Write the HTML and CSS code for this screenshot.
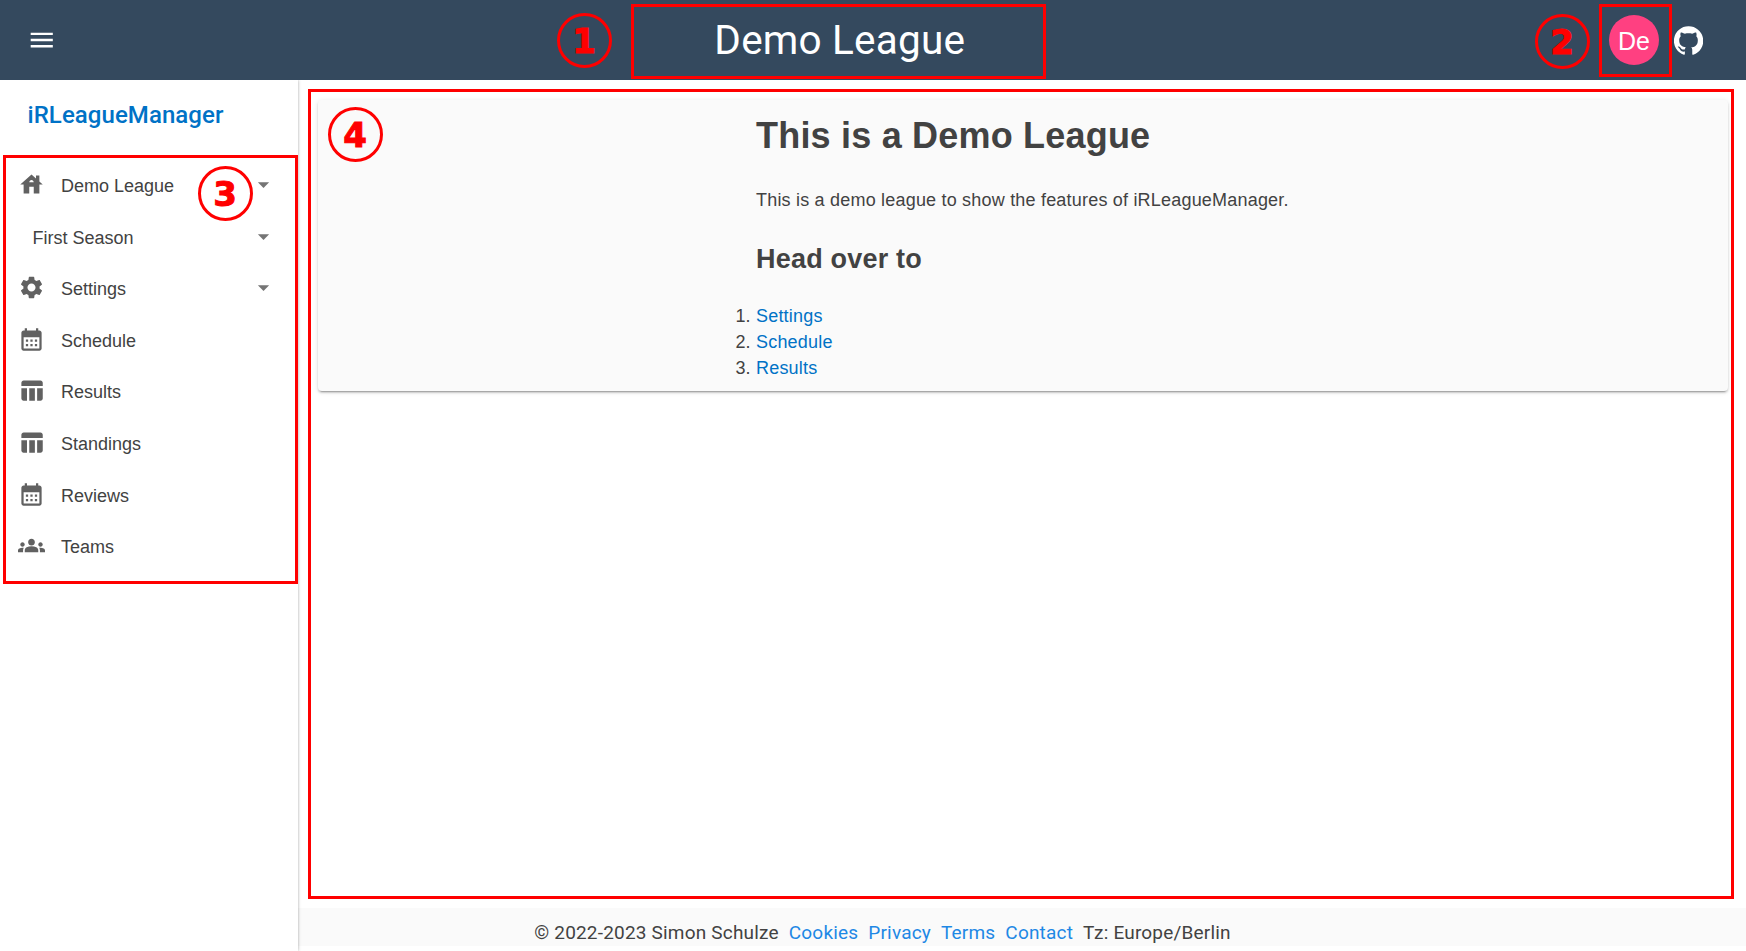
FILE: index.html
```html
<!DOCTYPE html>
<html lang="en">
<head>
<meta charset="utf-8">
<title>Demo League</title>
<link rel="stylesheet" href="styles.css">
</head>
<body>
<svg class="defs" aria-hidden="true">
  <symbol id="calendar" viewBox="0 0 24 24"><path d="M19 4h-1V2h-2v2H8V2H6v2H5c-1.110 0-2 .9-2 2v14c0 1.100.89 2 2 2h14c1.100 0 2-.9 2-2V6c0-1.100-.9-2-2-2zm0 16H5V10h14v10zM9 14H7v-2h2v2zm4 0h-2v-2h2v2zm4 0h-2v-2h2v2zm-8 4H7v-2h2v2zm4 0h-2v-2h2v2zm4 0h-2v-2h2v2z"/></symbol>
  <symbol id="table" viewBox="0 0 24 24"><path d="M10 10.020h5V21h-5zM17 21h3c1.100 0 2-.9 2-2v-9h-5v11zm3-18H5c-1.100 0-2 .9-2 2v3h19V5c0-1.100-.9-2-2-2zM3 19c0 1.100.9 2 2 2h3V10H3v9z"/></symbol>
  <symbol id="arrow" viewBox="0 0 24 24"><path d="M7 10l5 5 5-5z"/></symbol>
</svg>
<header class="appbar">
  <svg class="menu-icon" viewBox="0 0 24 24"><path d="M3 18h18v-2H3v2zm0-5h18v-2H3v2zm0-7v2h18V6H3z"/></svg>
  <div class="title">Demo League</div>
  <div class="avatar">De</div>
  <svg class="github" viewBox="1 1 22 22"><path d="M12 1.270a11 11 0 0 0-3.480 21.460c.55.09.73-.28.73-.55v-1.840c-3.030.64-3.670-1.460-3.670-1.460-.55-1.290-1.280-1.650-1.280-1.650-.92-.65.1-.65.1-.65 1.100 0 1.730 1.100 1.730 1.100.92 1.650 2.570 1.200 3.210.92a2 2 0 0 1 .64-1.470c-2.470-.27-5.040-1.190-5.040-5.500 0-1.100.46-2.100 1.200-2.840a3.760 3.760 0 0 1 0-2.930s.91-.28 3.110 1.100c1.800-.49 3.700-.49 5.500 0 2.100-1.380 3.020-1.100 3.020-1.100a3.760 3.760 0 0 1 .1 2.930c.83.74 1.200 1.740 1.200 2.940 0 4.210-2.570 5.130-5.040 5.400.45.37.82.92.82 2.020v3.030c0 .27.1.64.73.55A11 11 0 0 0 12 1.270"/></svg>
</header>
<div class="shell">
  <aside class="drawer">
    <div class="brand">iRLeagueManager</div>
    <nav class="nav">
      <a class="link"><svg class="icon" viewBox="0 0 24 24"><path d="M19 9.300V4h-3v2.600L12 3 2 12h3v8h5v-6h4v6h5v-8h3l-3-2.700zm-9 .7c0-1.100.9-2 2-2s2 .9 2 2h-4z"/></svg><span class="label">Demo League</span><svg class="caret"><use href="#arrow"/></svg></a>
      <a class="link season"><span class="label">First Season</span><svg class="caret"><use href="#arrow"/></svg></a>
      <a class="link"><svg class="icon" viewBox="0 0 24 24"><path d="M19.140 12.940c.04-.3.06-.61.06-.94 0-.32-.02-.64-.07-.94l2.030-1.580c.18-.14.23-.41.12-.61l-1.920-3.320c-.12-.22-.37-.29-.59-.22l-2.390.96c-.5-.38-1.030-.7-1.620-.94l-.36-2.540c-.04-.24-.24-.41-.48-.41h-3.840c-.24 0-.43.17-.47.41l-.36 2.540c-.59.24-1.130.57-1.620.94l-2.390-.96c-.22-.08-.47 0-.59.22L2.740 8.870c-.12.21-.08.47.12.61l2.030 1.580c-.05.3-.09.63-.09.94s.02.64.07.94l-2.030 1.580c-.18.14-.23.41-.12.61l1.920 3.320c.12.22.37.29.59.22l2.390-.96c.5.38 1.030.7 1.620.94l.36 2.540c.05.24.24.41.48.41h3.840c.24 0 .44-.17.47-.41l.36-2.540c.59-.24 1.130-.56 1.620-.94l2.390.96c.22.08.47 0 .59-.22l1.920-3.320c.12-.22.07-.47-.12-.61l-2.010-1.580zM12 15.600c-1.980 0-3.600-1.620-3.600-3.600s1.620-3.600 3.600-3.600 3.600 1.620 3.600 3.600-1.620 3.600-3.600 3.600z"/></svg><span class="label">Settings</span><svg class="caret"><use href="#arrow"/></svg></a>
      <a class="link"><svg class="icon"><use href="#calendar"/></svg><span class="label">Schedule</span></a>
      <a class="link"><svg class="icon"><use href="#table"/></svg><span class="label">Results</span></a>
      <a class="link"><svg class="icon"><use href="#table"/></svg><span class="label">Standings</span></a>
      <a class="link"><svg class="icon"><use href="#calendar"/></svg><span class="label">Reviews</span></a>
      <a class="link"><svg class="icon" viewBox="0 0 24 24"><path d="M4 13c1.100 0 2-.9 2-2s-.9-2-2-2-2 .9-2 2 .9 2 2 2zm1.130 1.100C4.760 14.040 4.390 14 4 14c-.99 0-1.930.21-2.780.58C.48 14.900 0 15.620 0 16.430V18h4.500v-1.610c0-.83.23-1.610.63-2.290zM20 13c1.100 0 2-.9 2-2s-.9-2-2-2-2 .9-2 2 .9 2 2 2zm4 3.430c0-.81-.48-1.530-1.220-1.850-.85-.37-1.790-.58-2.780-.58-.39 0-.76.04-1.130.1.4.68.63 1.460.63 2.290V18H24v-1.570zm-7.760-2.780c-1.170-.52-2.610-.9-4.240-.9s-3.070.39-4.240.9C6.680 14.130 6 15.210 6 16.390V18h12v-1.610c0-1.180-.68-2.260-1.760-2.740zM9 9c0 1.660 1.340 3 3 3s3-1.340 3-3-1.340-3-3-3-3 1.340-3 3z"/></svg><span class="label">Teams</span></a>
    </nav>
  </aside>
  <div class="content">
    <main class="main">
      <section class="card">
        <div class="article">
          <h1>This is a Demo League</h1>
          <p>This is a demo league to show the features of iRLeagueManager.</p>
          <h2>Head over to</h2>
          <ol>
            <li><a>Settings</a></li>
            <li><a>Schedule</a></li>
            <li><a>Results</a></li>
          </ol>
        </div>
      </section>
    </main>
    <footer class="footer"><span>© 2022-2023 Simon Schulze</span><a>Cookies</a><a>Privacy</a><a>Terms</a><a>Contact</a><span>Tz: Europe/Berlin</span></footer>
  </div>
</div>
<div class="frame frame-title"></div><div class="mark mark-title">1</div>
<div class="frame frame-user"></div><div class="mark mark-user">2</div>
<div class="frame frame-nav"></div><div class="mark mark-nav">3</div>
<div class="frame frame-content"></div><div class="mark mark-content">4</div>
</body>
</html>
```
FILE: styles.css
```css
* { box-sizing: border-box; }
body {
  margin: 0;
  width: 1746px;
  height: 951px;
  position: relative;
  overflow: hidden;
  display: flex;
  flex-direction: column;
  background: #fff;
  color: #424242;
  font: 18px/26px "Liberation Sans", Arial, sans-serif;
  letter-spacing: .2px;
}
.defs { position: absolute; width: 0; height: 0; }
svg { fill: currentColor; flex: none; }
.appbar {
  height: 80px;
  flex: none;
  display: flex;
  align-items: center;
  background: #34495e;
  color: #fff;
  padding: 0 43px 0 27px;
}
.menu-icon { width: 29.5px; height: 30px; }
.title {
  flex: 1;
  padding: 0 0 0 14px;
  text-align: center;
  font: 40.5px/48px Roboto, sans-serif;
  letter-spacing: .2px;
}
.avatar {
  width: 50px;
  height: 50px;
  padding-top: 2px;
  border-radius: 50%;
  background: #ff4081;
  display: flex;
  align-items: center;
  justify-content: center;
  font-size: 25px;
  letter-spacing: 0;
}
.github { width: 29px; height: 29px; margin-left: 15px; }
.shell { flex: 1; display: flex; min-height: 0; }
.drawer {
  width: 298px;
  flex: none;
  position: relative;
  z-index: 1;
  box-shadow: 0 0 3px rgba(0, 0, 0, .35);
  clip-path: inset(0 -5px 0 0);
}
.brand {
  height: 80px;
  padding: 15px 0 0 27.5px;
  font: 500 24px/40px Roboto, sans-serif;
  letter-spacing: .07px;
  color: #0072c6;
}
.nav { letter-spacing: 0; }
.link { display: flex; align-items: center; height: 51.6px; padding: 0 21px 0 18px; }
.icon { width: 27px; height: 27px; margin: 0 16px 2.5px 0; color: #616161; }
.caret { width: 27px; height: 27px; margin-bottom: 2px; color: #757575; }
.label { flex: 1; padding-top: .4px; }
.season { padding-left: 32.5px; }
.content { flex: 1; display: flex; flex-direction: column; }
.main { flex: 1; padding: 20px 18px 0 20px; }
.card {
  height: 291px;
  background: #fafafa;
  border-radius: 4px;
  box-shadow: 0 3px 1px -2px rgba(0, 0, 0, .2), 0 2px 2px 0 rgba(0, 0, 0, .14), 0 1px 5px 0 rgba(0, 0, 0, .12);
  padding: 14px 0 0 438px;
}
h1 { margin: 0; font-size: 36px; line-height: 43px; }
p { margin: 30px 0 0; }
h2 { margin: 27px 0 0; font-size: 27px; line-height: 39px; }
ol { margin: 24px 0 0; padding: 0; }
ol a { color: #0072c6; }
.footer {
  height: 38px;
  margin-bottom: 5px;
  flex: none;
  display: flex;
  justify-content: center;
  align-items: center;
  gap: 10px;
  padding: 12px 279px 0 0;
  background: #fafafa;
  font: 19px/26px Roboto, sans-serif;
  letter-spacing: .19px;
}
.footer a { color: #1e88e5; }
.frame { position: absolute; border: 3px solid #f00; }
.frame-title { left: 631px; top: 4px; width: 415px; height: 75px; }
.frame-user { left: 1599px; top: 4px; width: 73px; height: 73px; }
.frame-nav { left: 3px; top: 155px; width: 295px; height: 429px; }
.frame-content { left: 308px; top: 89px; width: 1426px; height: 810px; }
.mark {
  position: absolute;
  width: 55px;
  height: 55px;
  border: 3px solid #f00;
  border-radius: 50%;
  color: #f00;
  font: bold 34px/50px "DejaVu Sans", sans-serif;
  -webkit-text-stroke: 1px #f00;
  letter-spacing: 0;
  text-align: center;
  text-indent: -1px;
}
.mark-title { left: 557px; top: 13px; }
.mark-user { left: 1535px; top: 14px; }
.mark-nav { left: 198px; top: 166px; }
.mark-content { left: 328px; top: 107px; }
```
